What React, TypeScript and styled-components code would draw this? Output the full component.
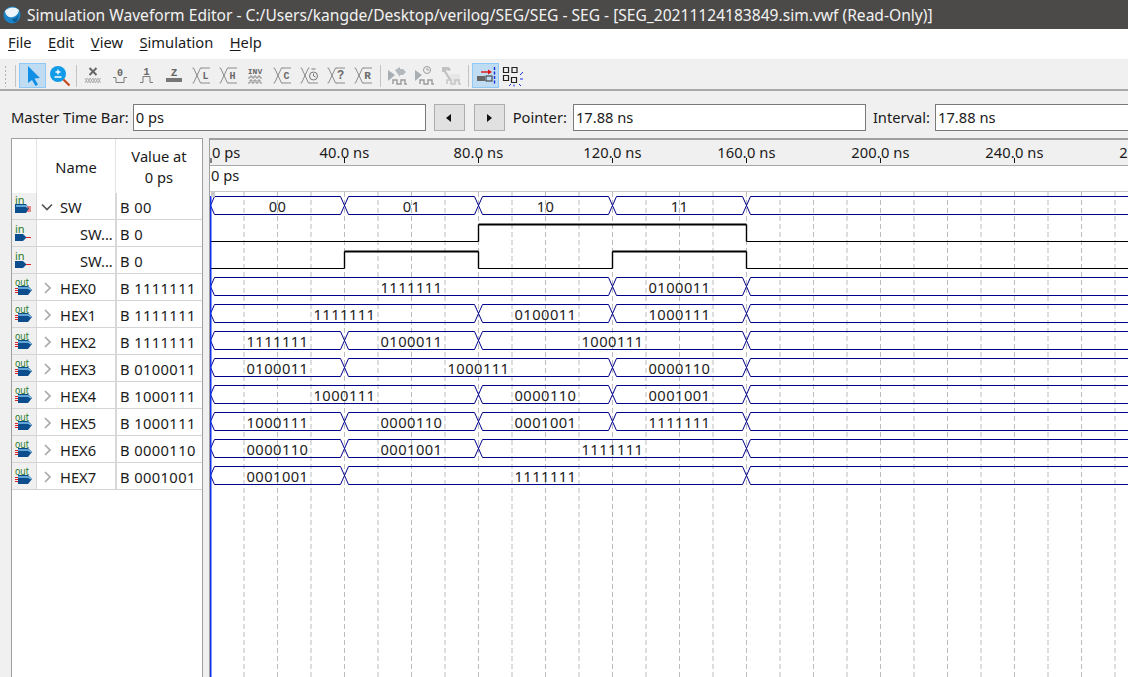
import React from "react";
import styled, { createGlobalStyle } from "styled-components";

const FONT = `"Noto Sans", "Open Sans", sans-serif`;
const MONO = `"Liberation Mono", monospace`;

const Global = createGlobalStyle`
  html, body { margin: 0; padding: 0; background: #f0f0f0; }
  body { font-family: ${FONT}; font-size: 14.7px; color: #1a1a1a; }
`;

const Page = styled.div`
  width: 1128px;
  height: 677px;
  overflow: hidden;
  display: flex;
  flex-direction: column;
  background: #f0f0f0;
`;

const TitleBar = styled.header`
  height: 29px;
  flex: none;
  background: #4c4a48;
  color: #f2f2f2;
  display: flex;
  align-items: center;
  gap: 6px;
  padding-left: 3px;
  font-size: 15.58px;
  white-space: nowrap;
`;

const MenuBar = styled.nav`
  height: 31px;
  flex: none;
  background: #fff;
  display: flex;
  align-items: center;
  gap: 16.5px;
  padding: 0 0 4px 8px;
  box-sizing: border-box;
  border-bottom: 1px solid #eeeeee;
`;

const MenuItem = styled.span`
  & > u { text-underline-offset: 2px; }
`;

const Toolbar = styled.div`
  height: 31px;
  flex: none;
  box-sizing: border-box;
  background: #f0f0f0;
  border-bottom: 2px solid #a9a9a9;
  display: flex;
  align-items: center;
  padding: 2px 0 0 4px;
`;

const Grip = styled.span`
  width: 3px;
  height: 22px;
  margin-right: 5px;
  background-image: radial-gradient(#b0b0b0 1px, transparent 1px);
  background-size: 3px 4px;
`;

const Sep = styled.span`
  width: 1px;
  height: 22px;
  background: #c4c4c4;
  margin: 0 3px;
`;

const ToolButton = styled.span<{ $active?: boolean }>`
  width: 27px;
  height: 25px;
  flex: none;
  box-sizing: border-box;
  display: flex;
  align-items: center;
  justify-content: center;
  background: ${(p) => (p.$active ? "#c0dcf3" : "transparent")};
  border: 1px solid ${(p) => (p.$active ? "#90c8f6" : "transparent")};
`;

const TimeBar = styled.div`
  height: 47px;
  flex: none;
  box-sizing: border-box;
  display: flex;
  align-items: flex-start;
  padding: 13px 0 0 11px;
  white-space: nowrap;
`;

const FieldLabel = styled.label<{ $left: number; $right: number }>`
  line-height: 27px;
  margin-left: ${(p) => p.$left}px;
  margin-right: ${(p) => p.$right}px;
`;

const Field = styled.div<{ $w: number }>`
  width: ${(p) => p.$w}px;
  height: 27px;
  flex: none;
  box-sizing: border-box;
  background: #fff;
  border: 1px solid #7a7a7a;
  line-height: 25px;
  padding-left: 2px;
`;

const StepButton = styled.span<{ $left: number }>`
  width: 31px;
  height: 27px;
  flex: none;
  box-sizing: border-box;
  margin-left: ${(p) => p.$left}px;
  background: #e1e1e1;
  border: 1px solid #adadad;
  display: flex;
  align-items: center;
  justify-content: center;
`;

const Work = styled.main`
  flex: 1;
  min-height: 0;
  display: flex;
  padding-left: 11px;
  gap: 6px;
`;

const SignalPanel = styled.section`
  width: 192px;
  flex: none;
  box-sizing: border-box;
  background: #fff;
  border: solid #a0a0a0;
  border-width: 1px 1px 0 1px;
`;

const HeaderRow = styled.div`
  height: 54px;
  display: grid;
  grid-template-columns: 25px 79px 1fr;
  text-align: center;
`;

const HeaderCell = styled.div`
  display: flex;
  align-items: center;
  justify-content: center;
  line-height: 21px;
  padding-top: 2px;
  border-right: 1px solid #e4e4e4;
  &:last-child { border-right: 0; }
`;

const Row = styled.div`
  height: 27px;
  box-sizing: border-box;
  display: grid;
  grid-template-columns: 25px 80px 1fr;
  border-bottom: 1px solid #d4d4d4;
  align-items: stretch;
`;

const PinCell = styled.div`
  background: #f0f0f0;
  border-right: 1px solid #d8d8d8;
  display: flex;
  align-items: flex-start;
  padding-left: 2px;
`;

const NameCell = styled.div<{ $child?: boolean }>`
  display: flex;
  align-items: center;
  border-right: 2px solid #d8d8d8;
  padding: 1px 0 0 ${(p) => (p.$child ? 43 : 4)}px;
  gap: 7px;
`;

const ValueCell = styled.div`
  display: flex;
  align-items: center;
  padding: 1px 0 0 3px;
  white-space: nowrap;
  letter-spacing: 0.4px;
`;

const WavePanel = styled.section`
  flex: 1;
  min-width: 0;
  display: flex;
  flex-direction: column;
  border-top: 2px solid #a0a0a0;
  border-left: 1px solid #a0a0a0;
  background: #fff;
`;

const Ruler = styled.svg`
  display: block;
  flex: none;
  background: #f0f0f0;
  border-bottom: 1px solid #a8a8a8;
`;

const CursorRow = styled.div`
  height: 25px;
  flex: none;
  line-height: 19px;
  padding-left: 1px;
  border-bottom: 1px solid #c8c8c8;
`;

const Chart = styled.svg`
  display: block;
  flex: 1;
  min-height: 0;
`;

/* ---------- icons ---------- */
const Ico: React.FC<{ children: React.ReactNode }> = ({ children }) => (
  <svg width="25" height="23" viewBox="0 0 25 23" fill="none" stroke="#7a7a7a" strokeWidth="1">
    {children}
  </svg>
);

const LetterX: React.FC<{ t: string; size?: number }> = ({ t, size = 10 }) => (
  <Ico>
    <path d="M3.500 4h1l7 15h1M3.500 19h1l7-15h1M12 4h9M12 19h9" stroke="#8c8c8c" />
    <text x="16.500" y="15" textAnchor="middle" fontFamily={MONO} fontWeight={700} fontSize={size} fill="#6a6a6a" stroke="none">
      {t}
    </text>
  </Ico>
);

const tools: React.ReactNode[] = [
  <Ico key="x">
    <path d="M8.500 4l7 7M15.500 4l-7 7" stroke="#666" strokeWidth="2" />
    <path d="M4 14l2.600 5 2.600-5 2.600 5 2.600-5 2.600 5 2.600-5M4 19l2.600-5 2.600 5 2.600-5 2.600 5 2.600-5 2.600 5" stroke="#999" strokeWidth=".7" />
  </Ico>,
  <Ico key="0">
    <text x="12" y="12" textAnchor="middle" fontFamily={MONO} fontWeight={700} fontSize="10" fill="#666" stroke="none">0</text>
    <path d="M5 13.500h3v5h8v-5h3" />
  </Ico>,
  <Ico key="1">
    <text x="11.500" y="11" textAnchor="middle" fontFamily={MONO} fontWeight={700} fontSize="10" fill="#666" stroke="none">1</text>
    <path d="M5 18.500h3v-6h7v6h3" />
  </Ico>,
  <Ico key="z">
    <text x="12" y="12" textAnchor="middle" fontFamily={MONO} fontWeight={700} fontSize="11" fill="#666" stroke="none">Z</text>
    <rect x="4" y="14" width="16" height="4" fill="#777" stroke="none" />
  </Ico>,
  <LetterX key="l" t="L" />,
  <LetterX key="h" t="H" />,
  <Ico key="inv">
    <text x="12" y="10" textAnchor="middle" fontFamily={MONO} fontWeight={700} fontSize="8" fill="#666" stroke="none">INV</text>
    <path d="M5 14h2v-2h2v2h2v-2h2v2h2v-2h2v2h2M5 19h2v-3h2v3h2v-3h2v3h2v-3h2v3h2" strokeWidth=".8" />
  </Ico>,
  <LetterX key="c" t="C" />,
  <Ico key="clk">
    <path d="M3.500 4h1l7 15h1M3.500 19h1l7-15h1M12 19h9" stroke="#8c8c8c" />
    <circle cx="16.500" cy="12" r="4" stroke="#777" />
    <path d="M16.500 9.500V12l2 1M14.500 5h4" stroke="#777" />
  </Ico>,
  <LetterX key="q" t="?" size={12} />,
  <LetterX key="r" t="R" size={11} />,
];

const Sim: React.FC<{ kind: "run" | "func" | "ham" }> = ({ kind }) => (
  <svg width="25" height="23" viewBox="0 0 25 23" fill="none">
    {kind !== "ham" && <path d="M3 6l7 5-7 6z" fill="#a6aeb4" />}
    {kind === "run" && <path d="M10 6l5-3v2h3l3 3-3 3h-3v2z" fill="#b3b8bc" />}
    {kind === "func" && (
      <>
        <circle cx="15" cy="6" r="3.500" stroke="#9a9a9a" />
        <path d="M15 4v2h2" stroke="#9a9a9a" />
      </>
    )}
    {kind === "ham" && (
      <>
        <rect x="11" y="10" width="10" height="9" fill="#e6e6e6" />
        <path d="M3 3h7l2 3-2 1-2-1-1 1 5 8-2 1-5-8-2 0z" fill="#c2c2c2" />
      </>
    )}
    <path d="M8 20v-4h4v4h4v-4h4v4h2" stroke={kind === "ham" ? "#c4c4c4" : "#9a9a9a"} strokeWidth="1.400" />
  </svg>
);

const SimIcon = () => (
  <svg width="18" height="18" viewBox="0 0 18 18">
    <circle cx="9" cy="9" r="8.500" fill="#1d83c7" />
    <path d="M2 5c3-4 10-5 14-1-1 6-6 8-10 7-2-1-4-3-4-6z" fill="#eef5fa" />
    <path d="M9 13c3 0 6-2 7-5l-2 7c-2 2-4 1-5-2z" fill="#0c5c94" />
  </svg>
);

const PinIcon: React.FC<{ kind: "in" | "inbus" | "out" }> = ({ kind }) => {
  if (kind === "out") {
    return (
      <svg width="20" height="26" viewBox="0 0 20 26">
        <path d="M4 12h10l4 4-4 5H4z" fill="#0b4d8d" />
        <path d="M4 14h10l3 2" stroke="#7fc4ec" strokeWidth="1.400" fill="none" />
        <path d="M1 14.500h3M1 16.500h3M1 18.500h3" stroke="#e02020" />
        <text x="1" y="11.500" fontFamily={FONT} fontSize="11" fill="#1f7a28" textLength="14" lengthAdjust="spacingAndGlyphs">out</text>
      </svg>
    );
  }
  if (kind === "in") {
    return (
      <svg width="20" height="26" viewBox="0 0 20 26">
        <path d="M1 14h8l3.500 3.500L9 21H1z" fill="#0b4d8d" />
        <path d="M12 17.500h5" stroke="#e02020" />
        <text x="1" y="13" fontFamily={FONT} fontSize="11" fill="#1f7a28">in</text>
      </svg>
    );
  }
  return (
    <svg width="20" height="26" viewBox="0 0 20 26">
      <path d="M1 11h11l3 4.500-3 4.500H1z" fill="#0b4d8d" />
      <path d="M2 13h10l2 2" stroke="#7fc4ec" strokeWidth="1.400" fill="none" />
      <path d="M13 14h4M14 16h3M13 18h4" stroke="#e02020" />
      <text x="1" y="11" fontFamily={FONT} fontSize="11" fill="#1f7a28">in</text>
    </svg>
  );
};

const Chevron: React.FC<{ open?: boolean }> = ({ open }) => (
  <svg width="12" height="12" viewBox="0 0 12 12" fill="none">
    {open ? (
      <path d="M1 3.500l5 5 5-5" stroke="#555" strokeWidth="1.700" />
    ) : (
      <path d="M4 1l5 5-5 5" stroke="#a8a8a8" strokeWidth="1.700" />
    )}
  </svg>
);

/* ---------- data ---------- */
const X0 = 210.5;
const PX = 3.35;
const xOf = (ns: number) => X0 + ns * PX;
const W = 1140;
const TOP = 192;
const H = 677 - TOP;

type Seg = [number, number, string];
const HEX_ROWS: { name: string; value: string; segs: Seg[] }[] = [
  { name: "HEX0", value: "B 1111111", segs: [[0, 120, "1111111"], [120, 160, "0100011"]] },
  { name: "HEX1", value: "B 1111111", segs: [[0, 80, "1111111"], [80, 120, "0100011"], [120, 160, "1000111"]] },
  { name: "HEX2", value: "B 1111111", segs: [[0, 40, "1111111"], [40, 80, "0100011"], [80, 160, "1000111"]] },
  { name: "HEX3", value: "B 0100011", segs: [[0, 40, "0100011"], [40, 120, "1000111"], [120, 160, "0000110"]] },
  { name: "HEX4", value: "B 1000111", segs: [[0, 80, "1000111"], [80, 120, "0000110"], [120, 160, "0001001"]] },
  { name: "HEX5", value: "B 1000111", segs: [[0, 40, "1000111"], [40, 80, "0000110"], [80, 120, "0001001"], [120, 160, "1111111"]] },
  { name: "HEX6", value: "B 0000110", segs: [[0, 40, "0000110"], [40, 80, "0001001"], [80, 160, "1111111"]] },
  { name: "HEX7", value: "B 0001001", segs: [[0, 40, "0001001"], [40, 160, "1111111"]] },
];
const SW_SEGS: Seg[] = [[0, 40, "00"], [40, 80, "01"], [80, 120, "10"], [120, 160, "11"]];

const Bus: React.FC<{ row: number; segs: Seg[] }> = ({ row, segs }) => {
  const top = 4.5 + row * 27;
  const bot = top + 18;
  const mid = top + 9;
  const ends = [...segs.map((s) => s[1]), 400];
  const starts = [0, ...segs.map((s) => s[1])];
  return (
    <g>
      {ends.map((e, i) => {
        const a = xOf(starts[i]);
        const b = xOf(e);
        return (
          <path
            key={i}
            d={`M${b - 4} ${top}L${a + 4} ${top}L${a} ${mid}L${a + 4} ${bot}L${b - 4} ${bot}L${b} ${mid}Z`}
            fill="none"
            stroke="#00008b"
            strokeWidth="1"
          />
        );
      })}
      {segs.map((s, i) => (
        <text key={i} x={(xOf(s[0]) + xOf(s[1])) / 2} y={top + 15.5} textAnchor="middle" fontFamily={FONT} fontSize="14.7" letterSpacing="0.45" fill="#222">
          {s[2]}
        </text>
      ))}
    </g>
  );
};

const Level: React.FC<{ row: number; highs: [number, number][] }> = ({ row, highs }) => {
  const low = 49.5 + row * 27;
  const high = low - 17;
  let last = X0;
  const parts: React.ReactNode[] = [];
  highs.forEach(([a, b], i) => {
    const xa = xOf(a);
    const xb = xOf(b);
    parts.push(<path key={`l${i}`} d={`M${last} ${low}H${xa}`} stroke="#000" strokeWidth="1" />);
    parts.push(<path key={`v${i}`} d={`M${xa} ${low}V${high}M${xb} ${high}V${low}`} stroke="#000" strokeWidth="1.4" />);
    parts.push(<path key={`h${i}`} d={`M${xa} ${high}H${xb}`} stroke="#000" strokeWidth="2" />);
    last = xb;
  });
  parts.push(<path key="end" d={`M${last} ${low}H${W}`} stroke="#000" strokeWidth="1" />);
  return <g>{parts}</g>;
};

const TICKS: [number, string][] = [
  [40, "40.0 ns"],
  [80, "80.0 ns"],
  [120, "120.0 ns"],
  [160, "160.0 ns"],
  [200, "200.0 ns"],
  [240, "240.0 ns"],
  [280, "280.0 ns"],
];

export default function App() {
  const grid: number[] = [];
  for (let i = 1; i * 33.5 + X0 < 1128; i++) grid.push(X0 + i * 33.5);
  return (
    <Page>
      <Global />
      <TitleBar>
        <SimIcon />
        <span>Simulation Waveform Editor - C:/Users/kangde/Desktop/verilog/SEG/SEG - SEG - [SEG_20211124183849.sim.vwf (Read-Only)]</span>
      </TitleBar>
      <MenuBar>
        <MenuItem><u>F</u>ile</MenuItem>
        <MenuItem><u>E</u>dit</MenuItem>
        <MenuItem><u>V</u>iew</MenuItem>
        <MenuItem><u>S</u>imulation</MenuItem>
        <MenuItem><u>H</u>elp</MenuItem>
      </MenuBar>
      <Toolbar>
        <Grip />
        <Sep />
        <ToolButton $active>
          <svg width="18" height="22" viewBox="0 0 18 22">
            <path d="M4 1l12 12-5.500.5 3.500 6-2.500 1.500-3.500-6L4 18z" fill="#0f8fe6" />
          </svg>
        </ToolButton>
        <ToolButton>
          <svg width="22" height="22" viewBox="0 0 22 22" fill="none">
            <circle cx="9" cy="9" r="8" fill="#0f9be8" />
            <path d="M9 4.500v5M6.500 7h5M5.500 12h7" stroke="#fff" strokeWidth="1.300" />
            <path d="M14.500 14.500l6 6" stroke="#c8481c" strokeWidth="2.200" />
          </svg>
        </ToolButton>
        <Sep />
        {tools.map((n, i) => (
          <ToolButton key={i}>{n}</ToolButton>
        ))}
        <Sep />
        <ToolButton><Sim kind="run" /></ToolButton>
        <ToolButton><Sim kind="func" /></ToolButton>
        <ToolButton><Sim kind="ham" /></ToolButton>
        <Sep />
        <ToolButton $active>
          <svg width="24" height="20" viewBox="0 0 24 20" fill="none">
            <path d="M7 6h9" stroke="#e01010" strokeWidth="1.400" />
            <path d="M14 3.500l4 2.500-4 2.500z" fill="#e01010" />
            <rect x="3" y="10" width="8" height="5" fill="#666" />
            <rect x="12" y="10" width="6" height="5" stroke="#333" />
            <path d="M20.500 1v18" stroke="#1030e0" strokeWidth="1.400" strokeDasharray="3 1.500" />
          </svg>
        </ToolButton>
        <ToolButton>
          <svg width="22" height="22" viewBox="0 0 22 22" fill="none">
            <path d="M1.500 2.500h5v5h-5zM10 2.500h5v5h-5zM1.500 10.500h5v5h-5zM9.500 12.500h5v5h-5z" stroke="#222" strokeWidth="1.200" />
            <path d="M18 10l3-3M18 14h3M17 19l2 2M12 19.500v2M9 19l-2 2" stroke="#1030e0" />
          </svg>
        </ToolButton>
      </Toolbar>
      <TimeBar>
        <FieldLabel $left={0} $right={4}>Master Time Bar:</FieldLabel>
        <Field $w={293}>0 ps</Field>
        <StepButton $left={8}>
          <svg width="6" height="8" viewBox="0 0 6 8"><path d="M5 0v8L0 4z" fill="#111" /></svg>
        </StepButton>
        <StepButton $left={9}>
          <svg width="6" height="8" viewBox="0 0 6 8"><path d="M1 0v8l5-4z" fill="#111" /></svg>
        </StepButton>
        <FieldLabel $left={8} $right={6}>Pointer:</FieldLabel>
        <Field $w={293}>17.88 ns</Field>
        <FieldLabel $left={7} $right={5}>Interval:</FieldLabel>
        <Field $w={260}>17.88 ns</Field>
      </TimeBar>
      <Work>
        <SignalPanel>
          <HeaderRow>
            <HeaderCell />
            <HeaderCell>Name</HeaderCell>
            <HeaderCell>Value at<br />0 ps</HeaderCell>
          </HeaderRow>
          <Row>
            <PinCell><PinIcon kind="inbus" /></PinCell>
            <NameCell><Chevron open />SW</NameCell>
            <ValueCell>B 00</ValueCell>
          </Row>
          <Row>
            <PinCell><PinIcon kind="in" /></PinCell>
            <NameCell $child>SW...</NameCell>
            <ValueCell>B 0</ValueCell>
          </Row>
          <Row>
            <PinCell><PinIcon kind="in" /></PinCell>
            <NameCell $child>SW...</NameCell>
            <ValueCell>B 0</ValueCell>
          </Row>
          {HEX_ROWS.map((r) => (
            <Row key={r.name}>
              <PinCell><PinIcon kind="out" /></PinCell>
              <NameCell><Chevron />{r.name}</NameCell>
              <ValueCell>{r.value}</ValueCell>
            </Row>
          ))}
        </SignalPanel>
        <WavePanel>
          <Ruler width="918" height="25" viewBox="210 140 918 25">
            <text x="212" y="157.5" fontFamily={FONT} fontSize="14.7" fill="#1a1a1a">0 ps</text>
            <path d="M211 158v5" stroke="#111" />
            {TICKS.map(([ns, label]) => (
              <g key={ns}>
                <text x={xOf(ns)} y="157.5" textAnchor="middle" fontFamily={FONT} fontSize="14.7" letterSpacing="0.1" fill="#1a1a1a">{label}</text>
                <path d={`M${xOf(ns)} 158v5`} stroke="#111" />
              </g>
            ))}
          </Ruler>
          <CursorRow>0 ps</CursorRow>
          <Chart width="918" height={H} viewBox={`210 0 918 ${H}`} preserveAspectRatio="xMinYMin">
            {grid.map((x) => (
              <path key={x} d={`M${x} 0V${H}`} stroke="#bdbdbd" strokeDasharray="5 3" />
            ))}
            <Bus row={0} segs={SW_SEGS} />
            <Level row={0} highs={[[80, 160]]} />
            <Level row={1} highs={[[40, 80], [120, 160]]} />
            {HEX_ROWS.map((r, i) => (
              <Bus key={r.name} row={i + 3} segs={r.segs} />
            ))}
            <path d={`M210.5 4V${H}`} stroke="#1030f0" strokeWidth="2" />
            <rect x="211" y="0" width="4" height="5" fill="#c8c8c8" />
          </Chart>
        </WavePanel>
      </Work>
    </Page>
  );
}
